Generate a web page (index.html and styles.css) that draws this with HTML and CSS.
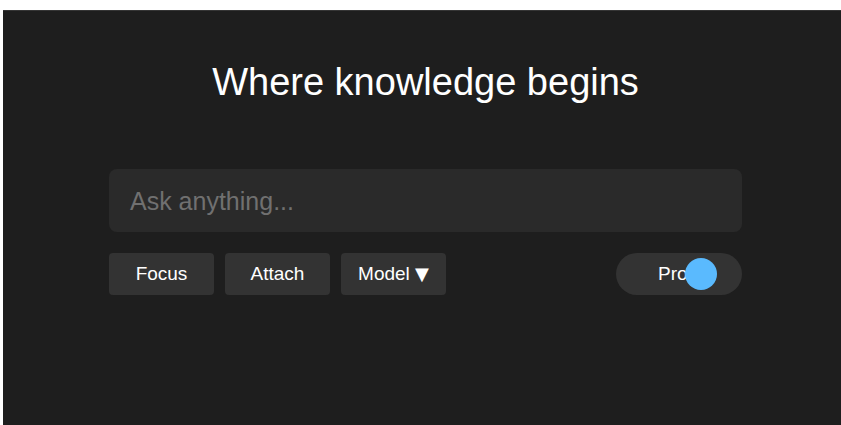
FILE: index.html
```html
<!DOCTYPE html>
<html>
<head>
<meta charset="utf-8">
<link rel="stylesheet" href="styles.css">
</head>
<body>
<div class="page">
  <div class="content">
    <h1 class="title">Where knowledge begins</h1>
    <div class="search">Ask anything...</div>
    <div class="actions">
      <div class="btns">
        <button class="btn">Focus</button>
        <button class="btn">Attach</button>
        <button class="btn">Model <span class="caret">▼</span></button>
      </div>
      <div class="toggle">
        <span class="toggle-label">Pro</span>
        <span class="knob"></span>
      </div>
    </div>
  </div>
</div>
</body>
</html>
```
FILE: styles.css
```css
html, body {
  margin: 0;
  padding: 0;
  background: #ffffff;
}
body {
  font-family: "Liberation Sans", Arial, sans-serif;
}
.page {
  margin: 10px 0 0 3px;
  height: 414px;
  background: #1e1e1e;
  border-top: 1px solid #353535;
}
.content {
  width: 633px;
  margin-left: 106px;
  padding-top: 48px;
  display: flex;
  flex-direction: column;
}
.title {
  margin: 0;
  color: #ffffff;
  font-weight: 400;
  font-size: 38px;
  line-height: 46px;
  text-align: center;
}
.search {
  margin-top: 64px;
  height: 63px;
  box-sizing: border-box;
  background: #2a2a2a;
  border-radius: 8px;
  padding-left: 21px;
  padding-top: 2px;
  display: flex;
  align-items: center;
  color: #707070;
  font-size: 25px;
}
.actions {
  margin-top: 21px;
  display: flex;
  justify-content: space-between;
  align-items: center;
}
.btns {
  display: flex;
  gap: 11px;
}
.btn {
  width: 105px;
  height: 42px;
  border: none;
  border-radius: 4px;
  background: #333333;
  color: #ffffff;
  font-family: "Liberation Sans", Arial, sans-serif;
  font-size: 19px;
  line-height: 22px;
  padding: 0;
}
.caret {
  font-family: "DejaVu Sans", sans-serif;
  font-size: 18px;
  line-height: 1;
}
.toggle {
  position: relative;
  width: 126px;
  height: 42px;
  border-radius: 21px;
  background: #333333;
  display: flex;
  align-items: center;
  box-sizing: border-box;
  padding-left: 42px;
}
.toggle-label {
  color: #ffffff;
  font-size: 19px;
}
.knob {
  position: absolute;
  left: 69px;
  top: 5px;
  width: 32px;
  height: 32px;
  border-radius: 50%;
  background: #5abafe;
}
```
